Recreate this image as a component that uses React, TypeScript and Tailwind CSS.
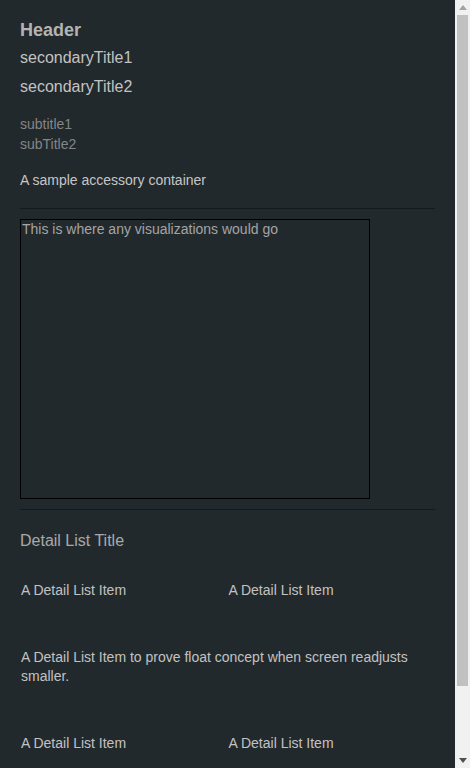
const detailItems = [
  { text: 'A Detail List Item', half: true },
  { text: 'A Detail List Item', half: true },
  { text: 'A Detail List Item to prove float concept when screen readjusts smaller.', half: false },
  { text: 'A Detail List Item', half: true },
  { text: 'A Detail List Item', half: true },
];

function Scrollbar() {
  return (
    <div className="flex h-full w-[15px] shrink-0 flex-col bg-[#f1f1f1]">
      <div className="flex h-[15px] items-center justify-center">
        <svg width="8" height="5" viewBox="0 0 8 5">
          <path d="M4 0 L8 5 L0 5 Z" fill="#a3a3a3" />
        </svg>
      </div>
      <div className="flex-1">
        <div className="mx-[2px] h-[671px] bg-[#c1c1c1]" />
      </div>
      <div className="flex h-[15px] items-center justify-center">
        <svg width="8" height="5" viewBox="0 0 8 5">
          <path d="M0 0 L8 0 L4 5 Z" fill="#505050" />
        </svg>
      </div>
    </div>
  );
}

export default function App() {
  return (
    <div className="flex h-screen bg-[#22292d] font-['Liberation_Sans',Arial,sans-serif]">
      <div className="flex-1 overflow-y-auto [scrollbar-width:none]">
        <div className="px-5 pt-[19px] pb-[69px]">
          {/* header block */}
          <h1 className="mb-[3px] text-[18px] font-bold leading-[22px] text-[#b3b3b3]">Header</h1>
          <h2 className="text-[16px] leading-[28px] text-[#c2c2c2]">secondaryTitle1</h2>
          <h2 className="mt-px text-[16px] leading-[28px] text-[#c2c2c2]">secondaryTitle2</h2>
          <div className="mt-[13px] text-[14px] leading-[20px] text-[#858585]">
            <p>subtitle1</p>
            <p>subTitle2</p>
          </div>
          <div className="mt-4 text-[14px] leading-[20px] text-[#c6c6c6]">A sample accessory container</div>

          <hr className="mt-[18px] border-0 border-t border-[#15191b]" />

          <div className="mt-[10px] h-[280px] w-[350px] border border-black p-px text-[14px] leading-[16px] text-[#a4a4a4]">
            This is where any visualizations would go
          </div>

          <hr className="mt-[10px] border-0 border-t border-[#15191b]" />

          <h3 className="mt-[21px] text-[16px] leading-[20px] text-[#a9a9a9]">Detail List Title</h3>

          <div className="mt-[6px] flex flex-wrap">
            {detailItems.map((item, i) => (
              <div
                key={i}
                className={`${item.half ? 'w-1/2' : 'w-full'} px-px py-6 text-[14px] leading-[19px] text-[#c2c2c2]`}
              >
                {item.text}
              </div>
            ))}
          </div>
        </div>
      </div>
      <Scrollbar />
    </div>
  );
}
